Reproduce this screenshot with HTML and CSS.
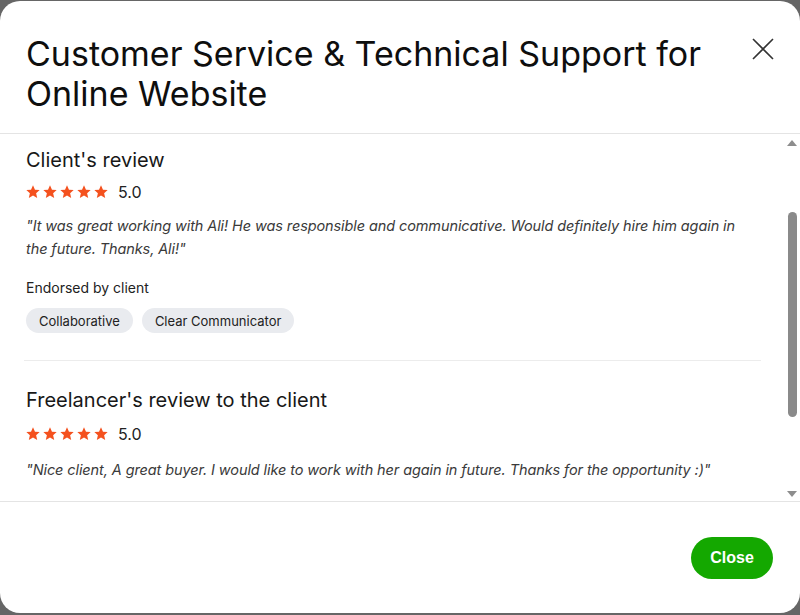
FILE: index.html
```html
<!DOCTYPE html>
<html lang="en">
<head>
<meta charset="utf-8">
<title>Review</title>
<link rel="stylesheet" href="styles.css">
</head>
<body>
<div class="modal">
  <header class="modal-header">
    <h1 class="title">Customer Service &amp; Technical Support for Online Website</h1>
    <button class="close-x" aria-label="Close">
      <svg width="22" height="22" viewBox="0 0 22 22"><path d="M1 1 L21 21 M21 1 L1 21" stroke="#333" stroke-width="1.6" fill="none"/></svg>
    </button>
  </header>
  <div class="modal-body">
    <div class="content">
      <section class="review">
        <h2 class="review-title">Client's review</h2>
        <div class="rating">
          <span class="stars">
            <svg viewBox="1 1.2 22 21"><path d="M12 1.5l3.1 7 7.4.6-5.6 4.9 1.7 7.4L12 17.5l-6.6 3.9 1.7-7.4-5.6-4.9 7.4-.6z"/></svg>
            <svg viewBox="1 1.2 22 21"><path d="M12 1.5l3.1 7 7.4.6-5.6 4.9 1.7 7.4L12 17.5l-6.6 3.9 1.7-7.4-5.6-4.9 7.4-.6z"/></svg>
            <svg viewBox="1 1.2 22 21"><path d="M12 1.5l3.1 7 7.4.6-5.6 4.9 1.7 7.4L12 17.5l-6.6 3.9 1.7-7.4-5.6-4.9 7.4-.6z"/></svg>
            <svg viewBox="1 1.2 22 21"><path d="M12 1.5l3.1 7 7.4.6-5.6 4.9 1.7 7.4L12 17.5l-6.6 3.9 1.7-7.4-5.6-4.9 7.4-.6z"/></svg>
            <svg viewBox="1 1.2 22 21"><path d="M12 1.5l3.1 7 7.4.6-5.6 4.9 1.7 7.4L12 17.5l-6.6 3.9 1.7-7.4-5.6-4.9 7.4-.6z"/></svg>
          </span>
          <span class="score">5.0</span>
        </div>
        <p class="quote">"It was great working with Ali! He was responsible and communicative. Would definitely hire him again in the future. Thanks, Ali!"</p>
        <p class="endorsed">Endorsed by client</p>
        <div class="chips">
          <span class="chip">Collaborative</span>
          <span class="chip">Clear Communicator</span>
        </div>
      </section>
      <hr class="divider">
      <section class="review second">
        <h2 class="review-title">Freelancer's review to the client</h2>
        <div class="rating">
          <span class="stars">
            <svg viewBox="1 1.2 22 21"><path d="M12 1.5l3.1 7 7.4.6-5.6 4.9 1.7 7.4L12 17.5l-6.6 3.9 1.7-7.4-5.6-4.9 7.4-.6z"/></svg>
            <svg viewBox="1 1.2 22 21"><path d="M12 1.5l3.1 7 7.4.6-5.6 4.9 1.7 7.4L12 17.5l-6.6 3.9 1.7-7.4-5.6-4.9 7.4-.6z"/></svg>
            <svg viewBox="1 1.2 22 21"><path d="M12 1.5l3.1 7 7.4.6-5.6 4.9 1.7 7.4L12 17.5l-6.6 3.9 1.7-7.4-5.6-4.9 7.4-.6z"/></svg>
            <svg viewBox="1 1.2 22 21"><path d="M12 1.5l3.1 7 7.4.6-5.6 4.9 1.7 7.4L12 17.5l-6.6 3.9 1.7-7.4-5.6-4.9 7.4-.6z"/></svg>
            <svg viewBox="1 1.2 22 21"><path d="M12 1.5l3.1 7 7.4.6-5.6 4.9 1.7 7.4L12 17.5l-6.6 3.9 1.7-7.4-5.6-4.9 7.4-.6z"/></svg>
          </span>
          <span class="score">5.0</span>
        </div>
        <p class="quote">"Nice client, A great buyer. I would like to work with her again in future. Thanks for the opportunity :)"</p>
      </section>
    </div>
    <div class="scrollbar" aria-hidden="true">
      <span class="arrow up"></span>
      <div class="track"><div class="thumb"></div></div>
      <span class="arrow down"></span>
    </div>
  </div>
  <footer class="modal-footer">
    <button class="btn-close">Close</button>
  </footer>
</div>
</body>
</html>
```
FILE: styles.css
```css
* { box-sizing: border-box; }
html, body { margin: 0; padding: 0; }
body {
  background: #666666;
  font-family: Inter, "Liberation Sans", Arial, sans-serif;
  color: #181818;
  height: 615px;
  overflow: hidden;
  padding-top: 1px;
}
.modal {
  width: 800px;
  height: 612px;
  background: #ffffff;
  border-radius: 20px;
  display: flex;
  flex-direction: column;
  overflow: hidden;
}
.modal-header {
  display: flex;
  justify-content: space-between;
  align-items: flex-start;
  padding: 33px 26px 19px 26px;
  border-bottom: 1px solid #e4e4e4;
}
.title {
  margin: 0;
  font-size: 34px;
  line-height: 40px;
  font-weight: 400;
  color: #0e0e0e;
  max-width: 700px;
  letter-spacing: 0;
}
.close-x {
  border: 0;
  background: none;
  padding: 0;
  margin-top: 4px;
  width: 22px;
  height: 22px;
  cursor: pointer;
}
.close-x svg { display: block; }
.modal-body {
  flex: 0 0 368px;
  display: flex;
  border-bottom: 1px solid #e4e4e4;
  overflow: hidden;
}
.content {
  flex: 1;
  padding: 12px 26px 0 26px;
  overflow: hidden;
}
.review-title {
  margin: 0;
  font-size: 20px;
  line-height: 28px;
  font-weight: 400;
  color: #181818;
}
.rating {
  display: flex;
  align-items: center;
  gap: 10px;
  margin-top: 8px;
  height: 20px;
}
.stars { display: flex; gap: 3px; }
.stars svg { width: 14px; height: 13.5px; fill: #f4511e; display: block; }
.score { font-size: 16px; color: #222; }
.quote {
  margin: 12px 0 0 0;
  font-size: 14.5px;
  line-height: 23px;
  font-style: italic;
  color: #3a3a3a;
  padding-right: 20px;
  letter-spacing: -0.1px;
}
.endorsed {
  margin: 18px 0 0 0;
  font-size: 14px;
  line-height: 20px;
  color: #222;
}
.chips { display: flex; gap: 9px; margin-top: 10px; }
.chip {
  display: inline-flex;
  align-items: center;
  height: 25px;
  padding: 0 13px;
  border-radius: 13px;
  background: #e9ebef;
  font-size: 13px;
  color: #222;
}
.divider {
  border: 0;
  border-top: 1px solid #ececec;
  margin: 27px -2px 0 -2px;
}
.second { padding-top: 25px; }
.second .rating { margin-top: 10px; }
.second .quote { margin-top: 14px; }
.scrollbar {
  flex: 0 0 14px;
  display: flex;
  flex-direction: column;
  align-items: center;
  padding: 6px 0 4px 0;
  margin-right: 1px;
}
.arrow { width: 0; height: 0; border-left: 5px solid transparent; border-right: 5px solid transparent; }
.arrow.up { border-bottom: 6px solid #8d8d8d; }
.arrow.down { border-top: 6px solid #8d8d8d; }
.track { flex: 1; width: 100%; display: flex; justify-content: center; padding-top: 66px; }
.thumb { width: 9px; height: 205px; background: #8a8a8a; border-radius: 5px; }
.modal-footer {
  flex: 1;
  display: flex;
  justify-content: flex-end;
  align-items: flex-start;
  padding: 35px 27px 0 0;
}
.btn-close {
  width: 82px;
  height: 42px;
  border: 0;
  border-radius: 21px;
  background: #14a800;
  color: #fff;
  font-family: "Liberation Sans", Arial, sans-serif;
  font-weight: 700;
  font-size: 16px;
  cursor: pointer;
}
```
